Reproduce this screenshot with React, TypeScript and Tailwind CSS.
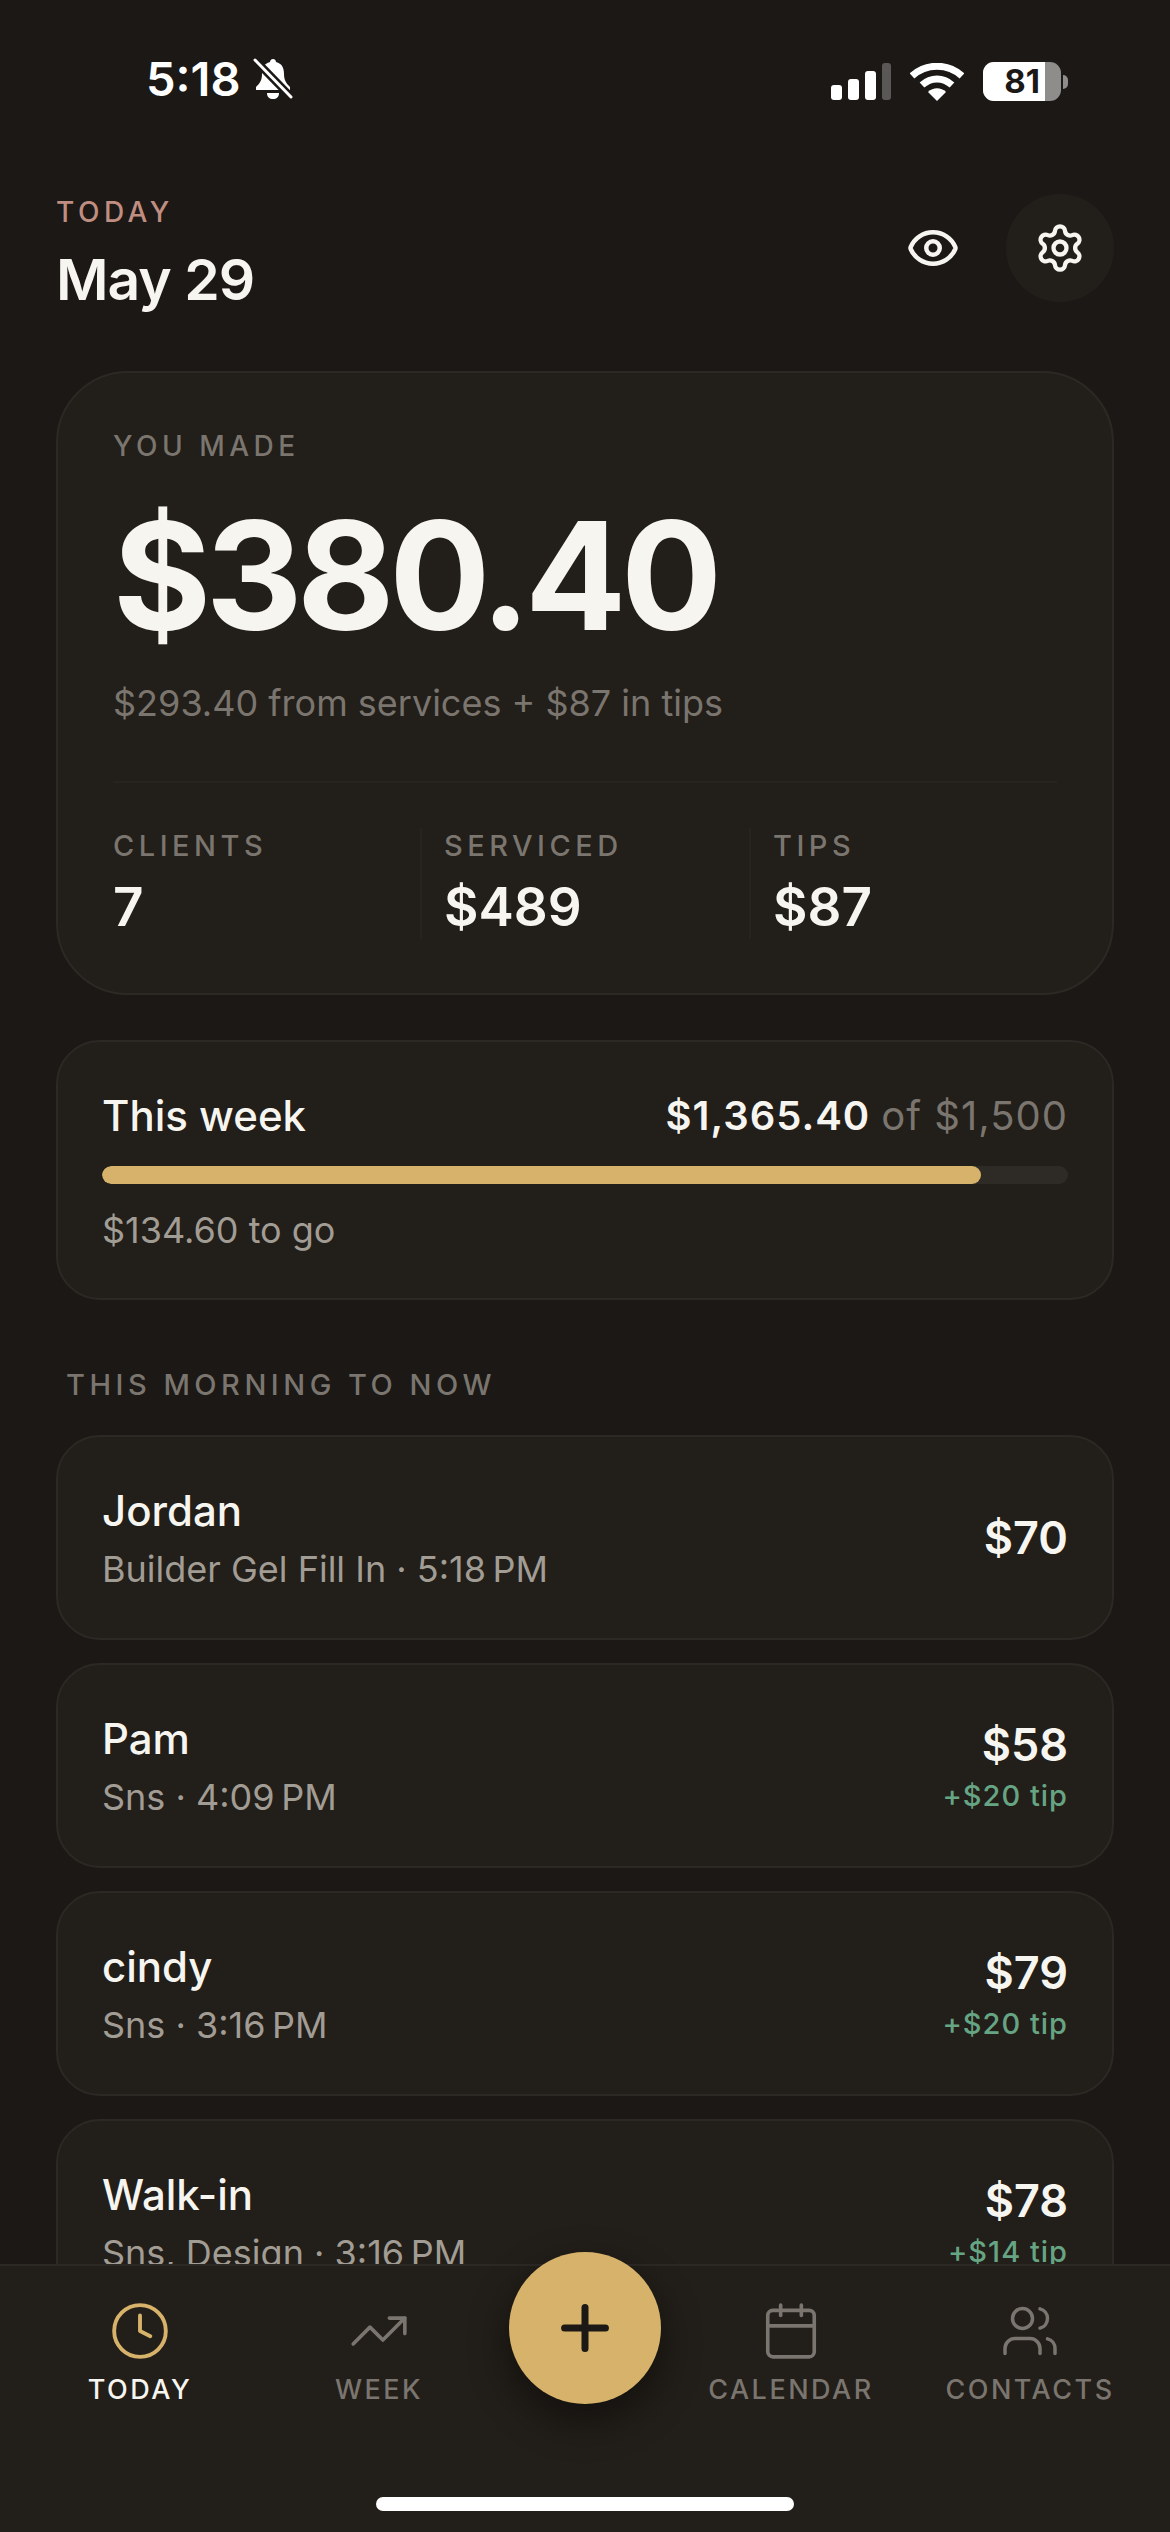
import { Calendar, Clock, Eye, Plus, Settings, TrendingUp, Users } from "lucide-react";

const ROWS = [
  { name: "Jordan", detail: "Builder Gel Fill In · 5:18\u202fPM", amount: "$70", tip: "" },
  { name: "Pam", detail: "Sns · 4:09\u202fPM", amount: "$58", tip: "+$20 tip" },
  { name: "cindy", detail: "Sns · 3:16\u202fPM", amount: "$79", tip: "+$20 tip" },
  { name: "Walk-in", detail: "Sns, Design · 3:16\u202fPM", amount: "$78", tip: "+$14 tip" },
];

const STATS = [
  { label: "CLIENTS", value: "7" },
  { label: "SERVICED", value: "$489" },
  { label: "TIPS", value: "$87" },
];

function StatusBar() {
  return (
    <div className="flex h-[120px] shrink-0 items-end justify-between pl-[146px] pr-[102px] pb-[13px]">
      <div className="flex items-center gap-[11px]">
        <span className="text-[47px] leading-[56px] font-semibold text-white">5:18</span>
        <svg width="42" height="42" viewBox="0 0 40 42" fill="none">
          <path d="M20 1c2 0 3 1.500 3 3 6 1.500 8 6 8 12 0 6 2 9 6 13v3H3v-3c4-4 6-7 6-13 0-6 2-10.500 8-12 0-1.500 1-3 3-3z" fill="#fff" />
          <path d="M14 35h12c0 4-2.500 6-6 6s-6-2-6-6z" fill="#fff" />
          <path d="M2 2l36 37" stroke="#1b1816" strokeWidth="8" />
          <path d="M2 2l36 37" stroke="#fff" strokeWidth="3" strokeLinecap="round" />
        </svg>
      </div>
      <div className="mb-[6px] flex items-center gap-[9px]">
        <div className="flex items-end gap-[6px]">
          <div className="h-[15px] w-[11px] rounded-[3px] bg-white" />
          <div className="h-[21px] w-[11px] rounded-[3px] bg-white" />
          <div className="h-[29px] w-[11px] rounded-[3px] bg-white" />
          <div className="h-[37px] w-[9px] rounded-[3px] bg-[#5a5856]" />
        </div>
        <svg width="54" height="38" viewBox="0 0 54 38" className="ml-[10px]">
          <path d="M2 13C16 0 38 0 52 13" stroke="#fff" strokeWidth="7" fill="none" />
          <path d="M12 22c9-8 21-8 30 0" stroke="#fff" strokeWidth="7" fill="none" />
          <path d="M18 29c5-5 13-5 18 0l-9 9z" fill="#fff" />
        </svg>
        <div className="relative ml-[10px] flex h-[39px] w-[78px] overflow-hidden rounded-[11px] bg-[#8f8d8b]">
          <div className="flex h-full w-[62px] items-center justify-end bg-white pr-[5px] text-[33px] leading-none font-bold text-[#1b1816]">
            81
          </div>
        </div>
        <div className="-ml-[7px] h-[14px] w-[5px] rounded-r-full bg-[#8f8d8b]" />
      </div>
    </div>
  );
}

function RowCard({ name, detail, amount, tip }: (typeof ROWS)[number]) {
  return (
    <div className="flex h-[205px] shrink-0 items-center justify-between rounded-[44px] border-2 border-[#2c2925] bg-[#221e19] pr-[44px] pl-[44px]">
      <div>
        <div className="text-[42px] leading-[56px] font-medium text-[#f7f5f0]">{name}</div>
        <div className="mt-[6px] text-[36px] leading-[48px] text-[#a19c94]">{detail}</div>
      </div>
      <div className="text-right">
        <div className="text-[45px] leading-[58px] font-semibold text-[#f7f5f0]">{amount}</div>
        {tip && <div className="mt-[3px] text-[29px] leading-[38px] font-medium tracking-[1px] text-[#66a584]">{tip}</div>}
      </div>
    </div>
  );
}

function NavItem({ label, active, icon }: { label: string; active?: boolean; icon: React.ReactNode }) {
  return (
    <div className="flex flex-col items-center">
      <div className="flex h-[66px] items-center justify-center">{icon}</div>
      <span className={`mt-[9px] text-[27px] leading-[34px] font-medium tracking-[2.5px] ${active ? "text-[#f7f5f0]" : "text-[#7a756e]"}`}>
        {label}
      </span>
    </div>
  );
}

export default function App() {
  return (
    <div className="flex h-[2532px] w-[1170px] flex-col overflow-hidden bg-[#1b1816] font-['Inter',sans-serif]">
      <StatusBar />

      <main className="flex min-h-0 flex-1 flex-col overflow-hidden px-[56px]">
        <header className="mt-[74px] flex items-start justify-between">
          <div>
            <div className="text-[28px] leading-[36px] font-medium tracking-[4.500px] text-[#c08e80]">TODAY</div>
            <div className="mt-[16px] text-[57px] leading-[68px] font-semibold tracking-[-1px] text-[#f7f5f0]">May 29</div>
          </div>
          <div className="flex items-center gap-[46px]">
            <Eye size={54} strokeWidth={2} className="text-[#f7f5f0]" />
            <div className="flex h-[108px] w-[108px] items-center justify-center rounded-full bg-[#221f1b]">
              <Settings size={52} strokeWidth={2} className="text-[#f7f5f0]" />
            </div>
          </div>
        </header>

        <section className="mt-[57px] flex h-[624px] shrink-0 flex-col rounded-[72px] border-2 border-[#2c2925] bg-[#221e19] px-[55px] pt-[55px]">
          <div className="text-[28px] leading-[36px] font-medium tracking-[4.500px] text-[#7a756e]">YOU MADE</div>
          <div className="mt-[25px] text-[150px] leading-[174px] font-bold tracking-[-5.500px] text-[#f7f5f0]">$380.40</div>
          <div className="mt-[18px] text-[36px] leading-[44px] text-[#7a756e]">$293.40 from services + $87 in tips</div>
          <div className="mt-[56px] h-[2px] bg-[#272420]" />
          <div className="mt-[45px] grid grid-cols-[307px_329px_1fr]">
            {STATS.map((stat, i) => (
              <div key={stat.label} className={i > 0 ? "border-l-2 border-[#272420] pl-[22px]" : ""}>
                <div className="text-[29px] leading-[36px] font-medium tracking-[4.500px] text-[#7a756e]">{stat.label}</div>
                <div className="mt-[11px] text-[53px] leading-[64px] font-semibold text-[#f7f5f0]">{stat.value}</div>
              </div>
            ))}
          </div>
        </section>

        <section className="mt-[45px] flex h-[260px] shrink-0 flex-col rounded-[44px] border-2 border-[#2c2925] bg-[#221e19] px-[44px] pt-[46px]">
          <div className="flex items-center justify-between">
            <span className="text-[42px] leading-[56px] font-medium text-[#f7f5f0]">This week</span>
            <span className="text-[40px] leading-[56px] font-semibold tracking-[1px] text-[#f7f5f0]">
              $1,365.40 <span className="font-normal text-[#7a756e]">of $1,500</span>
            </span>
          </div>
          <div className="mt-[22px] h-[18px] overflow-hidden rounded-full bg-[#2e2b26]">
            <div className="h-full w-[91%] rounded-full bg-[#d6b26a]" />
          </div>
          <div className="mt-[24px] text-[36px] leading-[44px] text-[#a19c94]">$134.60 to go</div>
        </section>

        <div className="mt-[67px] pl-[10px] text-[29px] leading-[36px] font-medium tracking-[4.500px] text-[#7a756e]">THIS MORNING TO NOW</div>

        <div className="mt-[32px] flex flex-col gap-[23px]">
          {ROWS.map((row) => (
            <RowCard key={row.name} {...row} />
          ))}
        </div>
      </main>

      <nav className="relative h-[268px] shrink-0 border-t-2 border-[#2c2925] bg-[#221e19]">
        <div className="absolute top-[-14px] left-1/2 flex h-[152px] w-[152px] -translate-x-1/2 items-center justify-center rounded-full bg-[#d6b26a] shadow-[0_16px_40px_rgba(0,0,0,0.45)]">
          <Plus size={70} strokeWidth={2.4} className="text-[#1b1816]" />
        </div>
        <div className="grid grid-cols-[280px_198px_194px_238px_240px] pt-[32px]">
          <NavItem label="TODAY" active icon={<Clock size={62} strokeWidth={1.5} className="text-[#d6b26a]" />} />
          <NavItem label="WEEK" icon={<TrendingUp size={62} strokeWidth={1.4} className="text-[#7a756e]" />} />
          <div />
          <NavItem label="CALENDAR" icon={<Calendar size={62} strokeWidth={1.4} className="text-[#7a756e]" />} />
          <NavItem label="CONTACTS" icon={<Users size={60} strokeWidth={1.4} className="text-[#7a756e]" />} />
        </div>
        <div className="absolute bottom-[21px] left-1/2 h-[14px] w-[418px] -translate-x-1/2 rounded-full bg-white" />
      </nav>
    </div>
  );
}
